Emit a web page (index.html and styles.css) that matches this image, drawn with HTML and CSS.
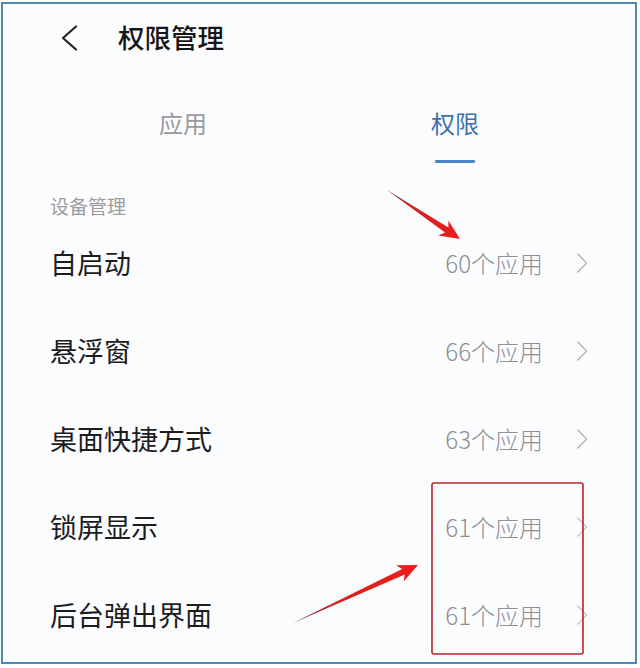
FILE: index.html
```html
<!DOCTYPE html>
<html lang="zh-CN">
<head>
<meta charset="utf-8">
<title>权限管理</title>
<link rel="stylesheet" href="styles.css">
</head>
<body>
<div class="frame">
  <div class="header">
    <svg class="back" width="18" height="26" viewBox="0 0 18 26"><path d="M16 1.5 L3 13 L16 24.5" fill="none" stroke="#222" stroke-width="2.2" stroke-linecap="round" stroke-linejoin="round"/></svg>
    <div class="title">权限管理</div>
  </div>
  <div class="tabs">
    <div class="tab">应用</div>
    <div class="tab active">权限<span class="indicator"></span></div>
  </div>
  <div class="section">设备管理</div>
  <div class="list">
    <div class="row"><span class="label">自启动</span><span class="value">60个应用</span><svg class="chev" width="12" height="22" viewBox="0 0 12 22"><path d="M1.5 1.5 L10.5 11 L1.5 20.5" fill="none" stroke="#b4b4b8" stroke-width="1.4"/></svg></div>
    <div class="row"><span class="label">悬浮窗</span><span class="value">66个应用</span><svg class="chev" width="12" height="22" viewBox="0 0 12 22"><path d="M1.5 1.5 L10.5 11 L1.5 20.5" fill="none" stroke="#b4b4b8" stroke-width="1.4"/></svg></div>
    <div class="row"><span class="label">桌面快捷方式</span><span class="value">63个应用</span><svg class="chev" width="12" height="22" viewBox="0 0 12 22"><path d="M1.5 1.5 L10.5 11 L1.5 20.5" fill="none" stroke="#b4b4b8" stroke-width="1.4"/></svg></div>
    <div class="row"><span class="label">锁屏显示</span><span class="value">61个应用</span><svg class="chev" width="12" height="22" viewBox="0 0 12 22"><path d="M1.5 1.5 L10.5 11 L1.5 20.5" fill="none" stroke="#c8c8cc" stroke-width="1.4"/></svg></div>
    <div class="row"><span class="label">后台弹出界面</span><span class="value">61个应用</span><svg class="chev" width="12" height="22" viewBox="0 0 12 22"><path d="M1.5 1.5 L10.5 11 L1.5 20.5" fill="none" stroke="#c8c8cc" stroke-width="1.4"/></svg></div>
  </div>
</div>
<svg class="annot" width="640" height="668" viewBox="0 0 640 668">
  <defs>
    <linearGradient id="g1" x1="387" y1="190" x2="460" y2="239" gradientUnits="userSpaceOnUse">
      <stop offset="0" stop-color="#6a2a48"/>
      <stop offset="0.35" stop-color="#d82020"/>
      <stop offset="1" stop-color="#ee1c1c"/>
    </linearGradient>
    <linearGradient id="g2" x1="293" y1="623" x2="418" y2="565" gradientUnits="userSpaceOnUse">
      <stop offset="0" stop-color="#5a2a5a"/>
      <stop offset="0.3" stop-color="#d82020"/>
      <stop offset="1" stop-color="#ee1c1c"/>
    </linearGradient>
  </defs>
  <polygon fill="url(#g1)" points="387,190 448.4,227.6 448.4,220.4 460,239 438.4,235.4 445,232.6"/>
  <polygon fill="url(#g2)" points="293,623 402.2,569 396.1,565.2 418,565 403.7,581.6 404.8,574.4"/>
  <rect x="432" y="483" width="151" height="171" rx="2" fill="none" stroke="#b3262a" stroke-width="1.6"/>
</svg>
</body>
</html>
```
FILE: styles.css
```css
html, body {
  margin: 0;
  padding: 0;
  background: #ffffff;
}
body {
  font-family: "Noto Sans CJK SC", "Noto Sans", sans-serif;
  width: 640px;
  height: 668px;
  position: relative;
  overflow: hidden;
}
.frame {
  box-sizing: border-box;
  margin: 2px 0 0 1px;
  width: 636px;
  height: 662px;
  border: 2px solid #4b8db0;
  background: #fbfcfe;
  display: flex;
  flex-direction: column;
}
.header {
  height: 66px;
  display: flex;
  align-items: center;
  padding-left: 57px;
}
.back {
  display: block;
  margin-top: 2px;
}
.title {
  margin-left: 40px;
  font-size: 26.5px;
  font-weight: 500;
  line-height: 30px;
  color: #161616;
}
.tabs {
  display: grid;
  grid-template-columns: 272px 272px;
  justify-content: center;
  padding-top: 36px;
}
.tab {
  display: flex;
  flex-direction: column;
  align-items: center;
  font-size: 24px;
  line-height: 34px;
  color: #9a9a9e;
}
.tab.active {
  color: #3e70ad;
}
.indicator {
  display: block;
  width: 40px;
  height: 3px;
  margin-top: 20px;
  background: #4a86c8;
  border-radius: 1px;
}
.section {
  margin-top: 30px;
  padding-left: 47px;
  font-size: 19px;
  line-height: 26px;
  color: #9c9ca0;
}
.list {
  display: flex;
  flex-direction: column;
}
.row {
  height: 88px;
  display: flex;
  align-items: center;
  padding: 0 47px;
}
.label {
  flex: 1;
  font-size: 27px;
  line-height: 34px;
  color: #1c1c1e;
}
.value {
  font-size: 24px;
  font-weight: 300;
  line-height: 32px;
  color: #8e8e93;
}
.chev {
  display: block;
  margin-left: 33px;
}
.annot {
  position: absolute;
  left: 0;
  top: 0;
  pointer-events: none;
}
```
